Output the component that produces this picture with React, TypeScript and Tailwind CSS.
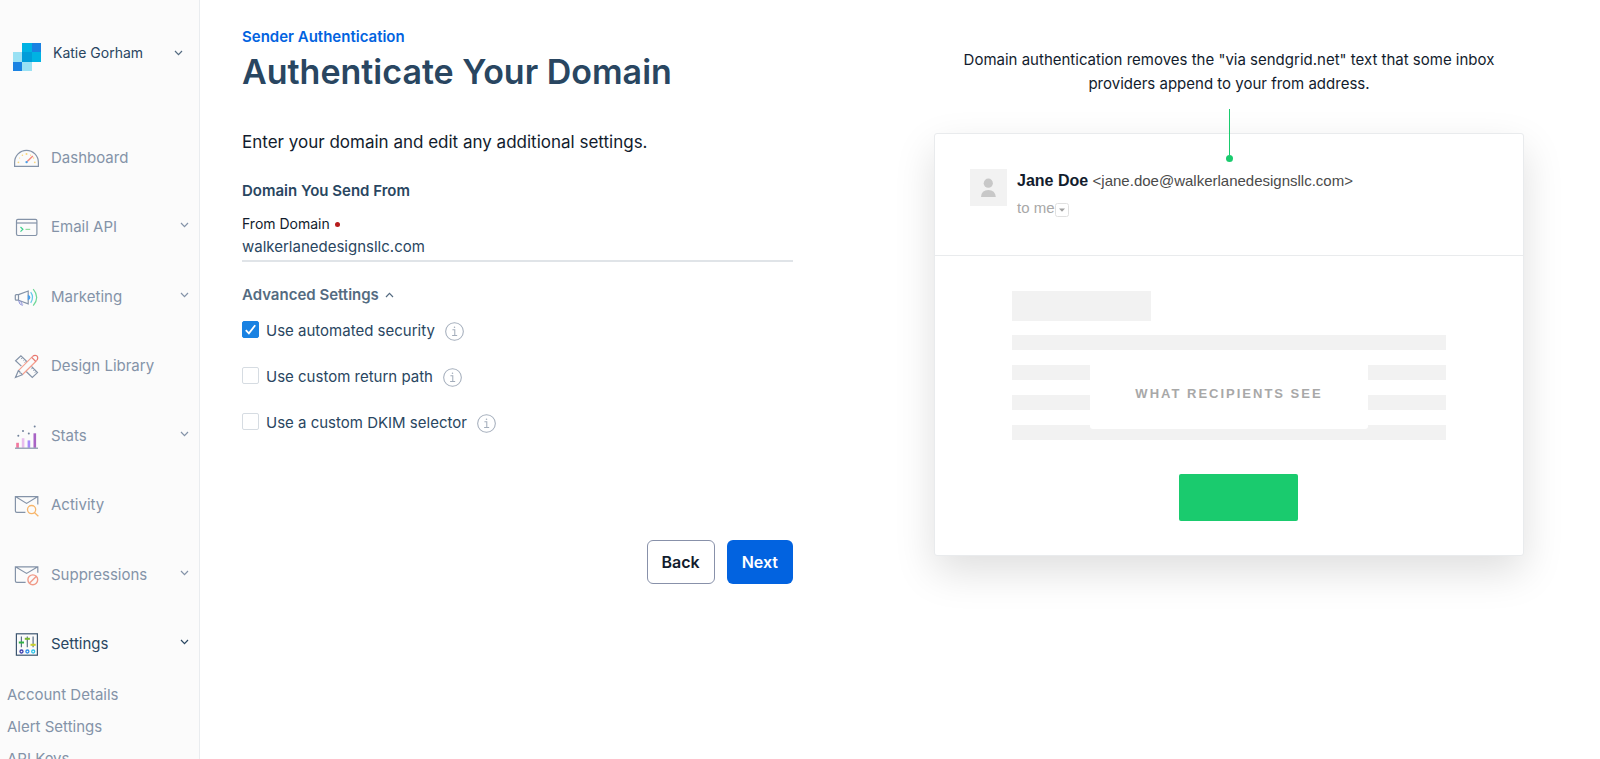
import { useState, type ReactNode } from "react";

function Svg({ children }: { children: ReactNode }) {
  return (
    <svg viewBox="0 0 26 26" className="size-[26px] shrink-0" fill="none" stroke="#8493a8" strokeWidth="1.2" aria-hidden="true">
      {children}
    </svg>
  );
}

function Chevron({ up = false }: { up?: boolean }) {
  return (
    <svg viewBox="0 0 9 6" className="h-[6px] w-[9px] shrink-0" fill="none" stroke="currentColor" strokeWidth="1.2" aria-hidden="true">
      <path d={up ? "M1 5L4.5 1.3L8 5" : "M1 1L4.5 4.7L8 1"} />
    </svg>
  );
}

const DashboardIcon = () => (
  <Svg>
    <path d="M1.6 21.3V17.4A11.9 12.1 0 0 1 25.4 17.4V21.3Z" />
    <g fill="#fbd77b" stroke="none">
      <circle cx="5.4" cy="17.3" r="0.9" />
      <circle cx="6.6" cy="13" r="0.6" />
      <circle cx="9.4" cy="10.2" r="0.8" />
      <circle cx="13.5" cy="9" r="1" />
      <circle cx="17.6" cy="10.2" r="0.6" />
      <circle cx="20.6" cy="13" r="0.7" />
      <circle cx="21.8" cy="17.3" r="0.9" />
    </g>
    <path d="M14.2 16.6L19.8 11" stroke="#f5897c" strokeWidth="1.4" />
    <circle cx="13.6" cy="17.1" r="1.2" fill="#4a9ee8" stroke="none" />
  </Svg>
);

const ApiIcon = () => (
  <Svg>
    <rect x="3.5" y="5.3" width="20.4" height="16.2" rx="1.4" />
    <path d="M3.5 9H23.9" />
    <path d="M7.5 13L9.9 15.3L7.5 17.6" stroke="#3fcf8e" />
    <path d="M12.5 15.4H17.2" stroke="#8fdc9c" />
  </Svg>
);

const MarketingIcon = () => (
  <Svg>
    <path d="M5.5 10.6H3.3Q2.3 10.6 2.3 11.6V15.2Q2.3 16.2 3.3 16.2H5.5Z" />
    <path d="M5.5 10.6L15.2 7V19.8L5.5 16.2" />
    <path d="M5.6 16.4Q5.9 20.6 9.6 21.5M7.8 17.1Q8 19 9.8 20.6" stroke="#8b8fd8" strokeWidth="1" />
    <path d="M15.4 11.6A2 2 0 0 1 15.4 15.4Z" fill="#4a9ee8" stroke="#4a9ee8" />
    <path d="M17.7 8.2Q21.4 13.4 17.7 18.8" stroke="#62c8ea" />
    <path d="M20.2 5.2Q27.2 13.4 20.2 21.7" stroke="#6fd898" />
  </Svg>
);

const DesignIcon = () => (
  <Svg>
    <path d="M8.4 13.1L2.6 7.8L7.9 2.8L14 8.6" />
    <path d="M9.6 4.6L8.1 6.1M11.6 6.6L10.5 7.6M13.2 8.2L11.7 9.7" strokeWidth="1" />
    <path d="M18.4 13.4L24.5 19.6L19.3 24.5L13.2 18.5" />
    <path d="M19.7 14.8L18.3 16.2M21.6 16.7L20.4 17.9M23.2 18.3L21.8 19.7" strokeWidth="1" />
    <path d="M5.4 17.6L19.4 3.6M23.5 7.7L9.3 21.7" stroke="#f5a08f" />
    <path d="M19.4 3.6Q21.3 1.8 23.7 2.7Q25.9 4.9 23.5 7.7M18.7 4.4L22.8 8.5" stroke="#e8776f" />
    <path d="M5.4 17.6L2.5 24.5L9.3 21.7Q8.6 19.9 7.2 20Q7.2 18.4 5.4 17.6Z" />
  </Svg>
);

const StatsIcon = () => (
  <Svg>
    <g stroke="none">
      <rect x="3.2" y="19.8" width="2.7" height="5" fill="#f2789f" />
      <rect x="8.8" y="15.2" width="2.6" height="9.6" fill="#e9bdee" />
      <rect x="14.6" y="17.4" width="2.6" height="7.4" fill="#a78bfa" />
      <rect x="20.5" y="10.3" width="2.6" height="14.5" fill="#a863c4" />
      <g fill="#71829b">
        <circle cx="5.3" cy="12.7" r="1" />
        <circle cx="10" cy="8.1" r="1" />
        <circle cx="15.8" cy="10.4" r="1" />
        <circle cx="21.7" cy="3.4" r="1" />
      </g>
    </g>
    <path d="M2 25.2H25" />
  </Svg>
);

const ActivityIcon = () => (
  <Svg>
    <path d="M12.4 20.3H3.8Q2.4 20.3 2.4 19V4.6H24.8V12.6M2.4 4.6L13.6 11.4L24.8 4.6" />
    <circle cx="18.6" cy="17.6" r="4.1" stroke="#f7b56a" strokeWidth="1.3" />
    <path d="M21.6 20.7L25.4 24.2" stroke="#f7b56a" strokeWidth="1.3" />
  </Svg>
);

const SuppressionsIcon = () => (
  <Svg>
    <path d="M12.6 20.3H3.8Q2.4 20.3 2.4 19V4.8H24.8V10.8M2.4 4.8L13.6 11.4L24.8 4.8" />
    <circle cx="19.8" cy="17.8" r="4.9" stroke="#f09a88" strokeWidth="1.4" />
    <path d="M16.6 21.1L23.1 14.5" stroke="#f09a88" strokeWidth="1.4" />
  </Svg>
);

const SettingsIcon = () => (
  <Svg>
    <rect x="3.4" y="2.8" width="21" height="21.4" stroke="#3d5670" strokeWidth="1.2" />
    <path d="M8.4 5.6V16.2M14.3 5.6V16.2M20.1 5.6V16.2" stroke="#5b7088" />
    <path d="M5.8 11.5H11" stroke="#2fb344" strokeWidth="2" />
    <path d="M11.8 7.8H16.9" stroke="#7ab82e" strokeWidth="2" />
    <path d="M17.5 13.8H22.7" stroke="#c9cf2a" strokeWidth="2" />
    <circle cx="8.5" cy="20.5" r="1.5" stroke="#3c3cae" strokeWidth="1.3" />
    <circle cx="14.4" cy="20.5" r="1.5" stroke="#2a8be6" strokeWidth="1.3" />
    <circle cx="20.2" cy="20.5" r="1.5" stroke="#2cc3e8" strokeWidth="1.3" />
  </Svg>
);

const navItems = [
  { label: "Dashboard", icon: <DashboardIcon />, expandable: false },
  { label: "Email API", icon: <ApiIcon />, expandable: true },
  { label: "Marketing", icon: <MarketingIcon />, expandable: true },
  { label: "Design Library", icon: <DesignIcon />, expandable: false },
  { label: "Stats", icon: <StatsIcon />, expandable: true },
  { label: "Activity", icon: <ActivityIcon />, expandable: false },
  { label: "Suppressions", icon: <SuppressionsIcon />, expandable: true },
  { label: "Settings", icon: <SettingsIcon />, expandable: true, active: true },
];

function Logo() {
  return (
    <svg viewBox="0 0 9 9" className="size-7 shrink-0" shapeRendering="crispEdges" aria-hidden="true">
      <path d="M0 3H3V6H0ZM3 6H6V9H3Z" fill="#99e1f4" />
      <path d="M0 6H3V9H0ZM6 0H9V3H6Z" fill="#1a82e2" />
      <path d="M3 0H6V3H3ZM6 3H9V6H6Z" fill="#00b2e3" />
      <path d="M3 3H6V6H3Z" fill="#009dd9" />
    </svg>
  );
}

function Sidebar() {
  return (
    <aside className="w-[200px] shrink-0 border-r border-[#e9ecef] bg-[#fbfbfb] text-[#8493a8]">
      <button type="button" className="flex h-[123px] w-full items-start pt-[43px] pr-4 pl-[13px] text-left">
        <Logo />
        <span className="ml-3 flex-1 text-sm leading-5 text-[#294661]">Katie Gorham</span>
        <span className="flex h-5 items-center text-[#546b81]">
          <Chevron />
        </span>
      </button>
      <nav>
        <ul className="flex h-[556px] flex-col">
          {navItems.map((item) => (
            <li key={item.label} className="flex-1">
              <a
                href="#"
                className={
                  item.active
                    ? "flex h-full items-center pr-[10px] pl-[13px] text-[15px] text-[#294661]"
                    : "flex h-full items-center pr-[10px] pl-[13px] text-[15px]"
                }
              >
                {item.icon}
                <span className="ml-3 flex-1 leading-5">{item.label}</span>
                {item.expandable && (
                  <span className="pb-1">
                    <Chevron />
                  </span>
                )}
              </a>
            </li>
          ))}
        </ul>
        <ul className="pl-[7px] text-[15px] leading-8">
          <li><a href="#">Account Details</a></li>
          <li><a href="#">Alert Settings</a></li>
          <li><a href="#">API Keys</a></li>
        </ul>
      </nav>
    </aside>
  );
}

function InfoButton({ label }: { label: string }) {
  return (
    <button type="button" aria-label={label} className="mt-[5px] ml-[10px]">
      <svg viewBox="0 0 20 20" className="size-[19px]" fill="none" stroke="#a3adbb" strokeWidth="1.1" aria-hidden="true">
        <circle cx="10" cy="10" r="9.3" />
        <path d="M7.8 8.2H10.3V14.2M7.5 14.3H12.8" />
        <circle cx="10" cy="5.6" r="0.8" fill="#a3adbb" stroke="none" />
      </svg>
    </button>
  );
}

function Option({ id, label, initial = false }: { id: string; label: string; initial?: boolean }) {
  const [checked, setChecked] = useState(initial);
  return (
    <div className="flex items-center">
      <span className="relative flex">
        <input
          id={id}
          type="checkbox"
          checked={checked}
          onChange={(event) => setChecked(event.target.checked)}
          className="peer size-[17px] appearance-none rounded-xs border border-[#d6dce2] bg-white checked:border-[#1a82e2] checked:bg-[#1a82e2]"
        />
        <svg viewBox="0 0 17 17" className="pointer-events-none absolute inset-0 hidden size-[17px] peer-checked:block" fill="none" stroke="#fff" strokeWidth="1.8" aria-hidden="true">
          <path d="M3.8 9.2L6.9 12.4L13.2 4.2" />
        </svg>
      </span>
      <label htmlFor={id} className="mt-1 ml-[7px] text-[15px] leading-5 text-[#294661]">{label}</label>
      <InfoButton label={"About: " + label} />
    </div>
  );
}

function DomainForm() {
  const [domain, setDomain] = useState("walkerlanedesignsllc.com");
  const [open, setOpen] = useState(true);
  return (
    <form className="pt-[26px]" onSubmit={(event) => event.preventDefault()}>
      <a href="#" className="block text-[15px] leading-[22px] font-semibold text-[#0263e0]">Sender Authentication</a>
      <h1 className="text-[34px] leading-[48px] font-semibold text-[#294661]">Authenticate Your Domain</h1>
      <p className="mt-8 text-[17px] leading-7 text-[#121c2d]">Enter your domain and edit any additional settings.</p>
      <h2 className="mt-[25px] text-[15px] leading-5 font-semibold text-[#294661]">Domain You Send From</h2>
      <label htmlFor="from-domain" className="mt-[13px] flex items-center text-sm leading-5 text-[#121c2d]">
        From Domain
        <span className="ml-[5px] size-[5px] rounded-full bg-[#b71c1c]" />
      </label>
      <input
        id="from-domain"
        type="text"
        value={domain}
        onChange={(event) => setDomain(event.target.value)}
        className="block h-7 w-full border-b-2 border-[#e0e4e8] pb-[2px] text-[15px] text-[#294661] outline-none"
      />
      <button
        type="button"
        aria-expanded={open}
        onClick={() => setOpen(!open)}
        className="mt-[23px] flex items-center gap-[6px] text-[15px] leading-5 font-semibold text-[#546b81]"
      >
        Advanced Settings
        <Chevron up={open} />
      </button>
      {open && (
        <div className="mt-3 flex flex-col gap-[22px]">
          <Option id="automated-security" label="Use automated security" initial />
          <Option id="return-path" label="Use custom return path" />
          <Option id="dkim-selector" label="Use a custom DKIM selector" />
        </div>
      )}
      <div className="mt-[107px] flex justify-end gap-3">
        <button type="button" className="h-11 rounded-md border border-[#8891aa] px-[14px] text-base font-semibold text-[#121c2d]">Back</button>
        <button type="submit" className="h-11 rounded-md bg-[#0263e0] px-[15px] text-base font-semibold text-white">Next</button>
      </div>
    </form>
  );
}

function EmailPreview() {
  return (
    <section className="pt-[48px]">
      <p className="text-center text-[15px] leading-6 text-[#121c2d]">
        Domain authentication removes the "via sendgrid.net" text that some inbox
        <br />
        providers append to your from address.
      </p>
      <div className="relative mt-[37px] rounded-[3px] border border-[#e9ebed] bg-white font-['Liberation_Sans',Arial,sans-serif] shadow-[0_16px_40px_rgba(0,0,0,0.13)]">
        <div className="absolute inset-x-0 -top-[25px] flex flex-col items-center">
          <span className="h-[46px] w-px bg-[#1acb6e]" />
          <span className="size-[7px] rounded-full bg-[#1acb6e]" />
        </div>
        <div className="flex h-[122px] gap-[10px] border-b border-[#e9ebed] pt-[35px] pl-[35px]">
          <svg viewBox="0 0 37 37" className="size-[37px] shrink-0" aria-hidden="true">
            <path d="M0 0H37V37H0Z" fill="#f2f2f2" />
            <circle cx="18.3" cy="14.2" r="4.6" fill="#c8c8c8" />
            <path d="M11 28Q11.4 21 18.3 21T25.8 28Z" fill="#c8c8c8" />
          </svg>
          <div>
            <p className="text-base leading-6 text-[#4a4a4a]">
              <strong className="font-bold text-[#121c2d]">Jane Doe</strong>{" "}
              <span className="text-[15px]">&lt;jane.doe@walkerlanedesignsllc.com&gt;</span>
            </p>
            <p className="mt-[3px] flex items-center text-[15px] leading-6 text-[#a8a8a8]">
              to me
              <svg viewBox="0 0 14 14" className="mt-[3px] size-[14px]" aria-hidden="true">
                <rect x="0.5" y="0.5" width="13" height="13" rx="2" fill="#fff" stroke="#e0e0e0" />
                <path d="M4 5.6H10L7 8.8Z" fill="#a0a0a0" />
              </svg>
            </p>
          </div>
        </div>
        <div className="px-[77px] pt-[35px] pb-[34px]">
          <div className="h-[30px] w-[139px] bg-[#f2f2f2]" />
          <div className="relative mt-[14px] flex flex-col gap-[15px]">
            <div className="h-[15px] bg-[#f2f2f2]" />
            <div className="h-[15px] bg-[#f2f2f2]" />
            <div className="h-[15px] bg-[#f2f2f2]" />
            <div className="h-[15px] bg-[#f2f2f2]" />
            <div className="absolute top-[24px] left-1/2 flex h-[70px] w-[278px] -translate-x-1/2 items-center justify-center rounded-[3px] bg-white text-[13px] font-bold tracking-[2px] text-[#a8a8a8]">
              WHAT RECIPIENTS SEE
            </div>
          </div>
          <div className="mt-[34px] flex justify-center pl-[18px]">
            <div className="h-[47px] w-[119px] rounded-xs bg-[#1acb6e]" />
          </div>
        </div>
      </div>
    </section>
  );
}

export default function App() {
  return (
    <div className="flex h-screen overflow-hidden bg-white font-[Inter,sans-serif]">
      <Sidebar />
      <main className="grid flex-1 grid-cols-[551fr_590fr] items-start gap-[141px] pr-[76px] pl-[42px]">
        <DomainForm />
        <EmailPreview />
      </main>
    </div>
  );
}
